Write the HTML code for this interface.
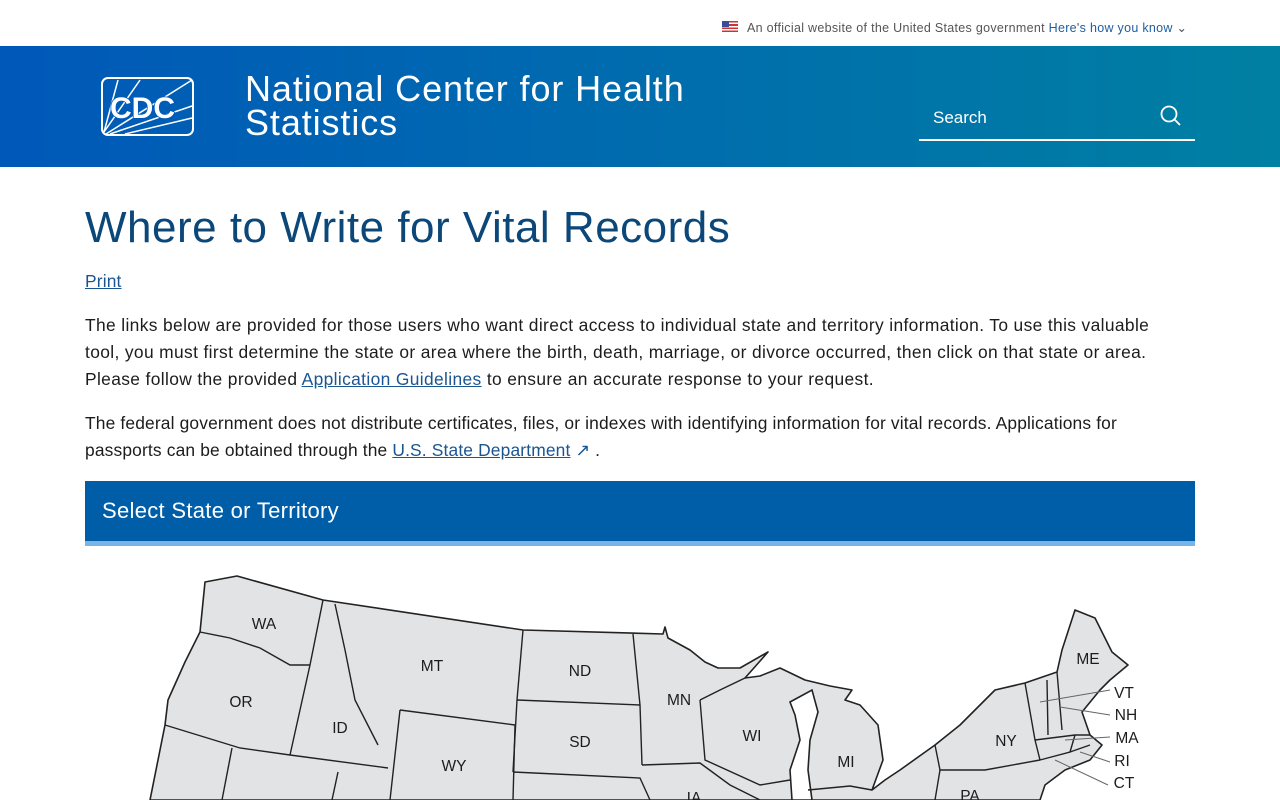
<!DOCTYPE html>
<html><head><meta charset="utf-8"><style>
*{margin:0;padding:0;box-sizing:border-box}
body{width:1280px;height:800px;overflow:hidden;background:#fff;font-family:"Liberation Sans",sans-serif;color:#1c1c1c}
.top{height:46px;position:relative;font-size:12.5px;color:#555;letter-spacing:0.3px}
.top .t{position:absolute;left:747px;top:20px}
.top .t a{color:#1f5e9e}
.flag{position:absolute;left:722px;top:21px;width:16px;height:11px;background:repeating-linear-gradient(#c33 0 1.6px,#fff 1.6px 3.2px)}
.flag:before{content:"";position:absolute;left:0;top:0;width:7px;height:6px;background:#3b4c99}
.hdr{position:absolute;top:46px;left:0;width:1280px;height:121px;background:linear-gradient(90deg,#0058b8 0%,#0068b0 40%,#0080a2 100%)}
.hdr h1{position:absolute;left:245px;top:26px;color:#fff;font-weight:normal;font-size:36px;line-height:34px;letter-spacing:0.9px}
.srch{position:absolute;left:919px;top:48px;width:276px;height:47px;border-bottom:2px solid #fff;color:#fff;font-size:17px;padding:14px 14px}
a{color:#1a5592}
h2{position:absolute;left:85px;top:203px;font-weight:normal;font-size:44px;color:#0b4778;letter-spacing:0.5px}
.p{position:absolute;left:85px;width:1110px;font-size:17.4px;line-height:27px;letter-spacing:0.15px}
.bar{position:absolute;left:85px;top:481px;width:1110px;height:65px;background:#005ea9;border-bottom:5px solid #7ab4e4;color:#fff;font-size:22px;padding:17px 17px;letter-spacing:0.3px}
svg{position:absolute;left:0;top:0}
</style></head><body>
<div class="top"><div class="flag"></div><div class="t">An official website of the United States government <a>Here's how you know</a> ⌄</div></div>
<div class="hdr">
<svg width="200" height="121" viewBox="0 0 200 121" style="left:0;top:0">
<rect x="102" y="32" width="91" height="57" rx="6" fill="none" stroke="#fff" stroke-width="2"/>
<g stroke="#fff" stroke-width="1.5" fill="none"><line x1="104" y1="86" x2="118" y2="34"/><line x1="104" y1="86" x2="140" y2="34"/><line x1="106" y1="88" x2="192" y2="34"/><line x1="110" y1="88" x2="192" y2="60"/><line x1="125" y1="88" x2="192" y2="72"/></g>
<text x="110" y="72" fill="#fff" font-family="Liberation Sans" font-weight="bold" font-size="30" stroke="#0058b8" stroke-width="1.5" paint-order="stroke">CDC</text>
</svg>
<h1>National Center for Health<br>Statistics</h1>
<div class="srch">Search
<svg width="24" height="24" style="left:240px;top:10px" viewBox="0 0 24 24"><circle cx="10" cy="10" r="7.5" fill="none" stroke="#fff" stroke-width="1.8"/><line x1="15.5" y1="15.5" x2="21" y2="21" stroke="#fff" stroke-width="1.8"/></svg></div>
</div>
<h2>Where to Write for Vital Records</h2>
<div class="p" style="top:268px"><a><u>Print</u></a></div>
<div class="p" style="top:312px;width:1078px;letter-spacing:0.36px">The links below are provided for those users who want direct access to individual state and territory information. To use this valuable tool, you must first determine the state or area where the birth, death, marriage, or divorce occurred, then click on that state or area. Please follow the provided <a><u>Application Guidelines</u></a> to ensure an accurate response to your request.</div>
<div class="p" style="top:410px">The federal government does not distribute certificates, files, or indexes with identifying information for vital records. Applications for passports can be obtained through the <a><u>U.S. State Department</u></a> <span style="color:#1a5592">↗</span> .</div>
<div class="bar">Select State or Territory</div>
<svg width="1280" height="800">
<g fill="#e2e3e4" stroke="#222" stroke-width="1.6" stroke-linejoin="round">
<path d="M205,582 L237,576 L323,600 L523,630 L663,634 L665,627 L668,638 L690,650 L705,662 L718,668 L740,668 L768,652 L745,678 L760,676 L780,668 L805,680 L830,686 L852,690 L845,700 L860,705 L878,725 L883,760 L872,790 L885,780 L900,770 L935,745 L960,725 L985,700 L995,690 L1025,683 L1057,672 L1062,650 L1075,610 L1095,618 L1112,652 L1128,665 L1110,680 L1100,690 L1082,712 L1090,735 L1102,745 L1090,760 L1065,770 L1045,785 L1040,800 L150,800 L158,760 L165,725 L168,700 L185,662 L200,632 Z"/>
</g>
<path d="M790,702 L812,690 L818,712 L810,740 L808,770 L812,800 L792,800 L790,770 L800,740 L795,715 Z" fill="#fff" stroke="#222" stroke-width="1.6"/>
<g fill="none" stroke="#222" stroke-width="1.4">
<path d="M200,632 L230,638 L260,648 L290,665 L310,665"/>
<path d="M323,600 L310,665 L290,755"/>
<path d="M165,725 L240,748 L290,755 L388,768"/>
<path d="M232,748 L222,800"/><path d="M338,772 L332,800"/>
<path d="M335,604 L345,650 L355,700 L378,745"/>
<path d="M400,710 L390,800"/>
<path d="M400,710 L515,725 L513,800"/>
<path d="M523,630 L517,700 L513,772"/>
<path d="M517,700 L640,705"/>
<path d="M513,772 L640,778 L650,800"/>
<path d="M633,634 L640,705 L642,765"/>
<path d="M642,765 L700,763 L730,785 L760,800"/>
<path d="M700,700 L720,690 L745,678"/>
<path d="M700,700 L705,760 L760,785 L790,780"/>
<path d="M808,790 L850,786 L872,790"/>
<path d="M935,745 L940,770 L985,770 L1040,760"/>
<path d="M940,770 L935,800"/>
<path d="M1025,683 L1035,740 L1040,760"/>
<path d="M1035,740 L1075,735 L1090,735"/>
<path d="M1047,680 L1048,735"/><path d="M1057,672 L1062,730"/>
<path d="M1040,760 L1070,752 L1075,735"/>
<path d="M1070,752 L1090,745"/>
</g>
<g stroke="#666" stroke-width="1"><line x1="1040" y1="702" x2="1110" y2="690"/><line x1="1060" y1="707" x2="1110" y2="715"/><line x1="1065" y1="740" x2="1110" y2="737"/><line x1="1080" y1="752" x2="1110" y2="762"/><line x1="1055" y1="760" x2="1108" y2="785"/></g>
<g font-family="Liberation Sans" font-size="15.5" fill="#1c1c1c" text-anchor="middle">
<text x="264" y="629">WA</text><text x="241" y="707">OR</text><text x="340" y="733">ID</text><text x="432" y="671">MT</text><text x="580" y="676">ND</text><text x="580" y="747">SD</text><text x="454" y="771">WY</text><text x="679" y="705">MN</text><text x="752" y="741">WI</text><text x="846" y="767">MI</text><text x="1006" y="746">NY</text><text x="970" y="801">PA</text><text x="694" y="803">IA</text><text x="1088" y="664">ME</text>
<text x="1124" y="698">VT</text><text x="1126" y="720">NH</text><text x="1127" y="743">MA</text><text x="1122" y="766">RI</text><text x="1124" y="788">CT</text>
</g>
</svg>
</body></html>
